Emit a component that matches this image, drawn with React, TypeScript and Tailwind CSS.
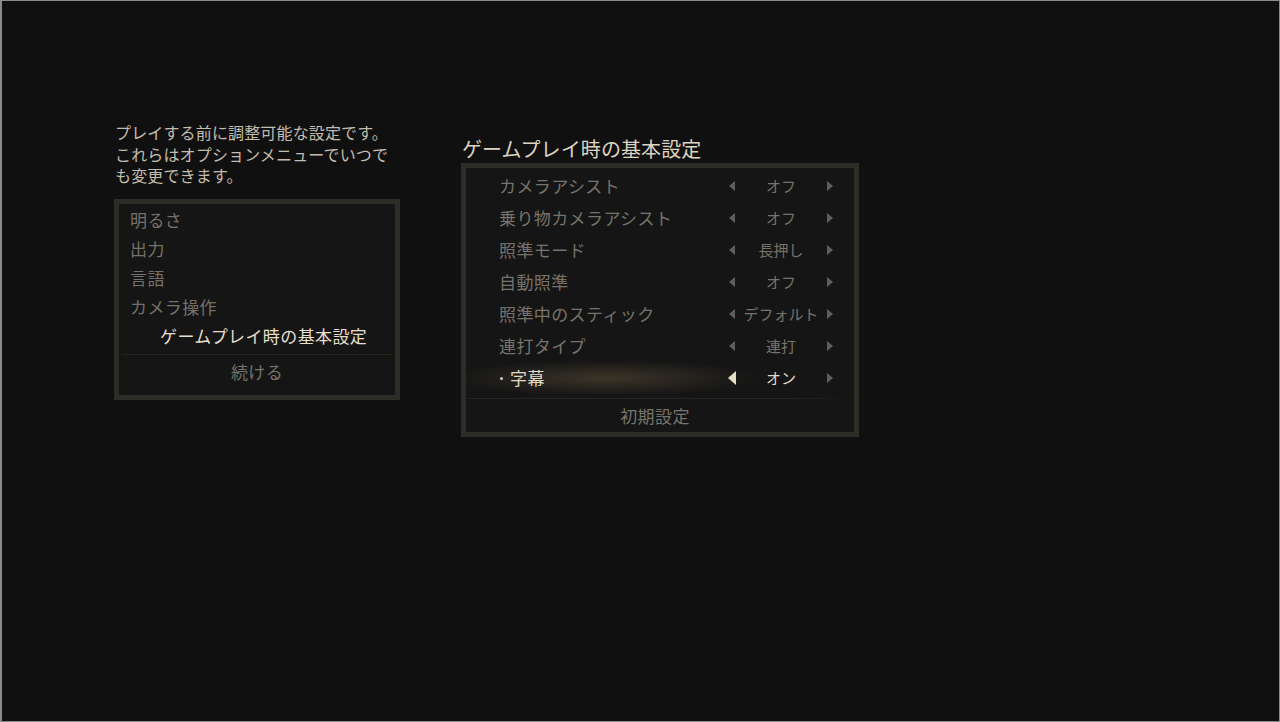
const FONT = { fontFamily: '"Noto Sans CJK JP", "Noto Sans", sans-serif' };

const menu = ['明るさ', '出力', '言語', 'カメラ操作', 'ゲームプレイ時の基本設定'];

const options = [
  { label: 'カメラアシスト', value: 'オフ' },
  { label: '乗り物カメラアシスト', value: 'オフ' },
  { label: '照準モード', value: '長押し' },
  { label: '自動照準', value: 'オフ' },
  { label: '照準中のスティック', value: 'デフォルト' },
  { label: '連打タイプ', value: '連打' },
  { label: '字幕', value: 'オン', active: true },
];

function Arrow({ dir, active = false }: { dir: 'left' | 'right'; active?: boolean }) {
  const w = active ? 8 : 6;
  const h = active ? 14 : 10;
  const pts = dir === 'left' ? `${w},0 ${w},${h} 0,${h / 2}` : `0,0 0,${h} ${w},${h / 2}`;
  return (
    <div className="flex w-3 items-center justify-center">
      <svg width={w} height={h} viewBox={`0 0 ${w} ${h}`}>
        <polygon points={pts} fill={active ? '#e6dec8' : '#5f5d58'} />
      </svg>
    </div>
  );
}

export default function App() {
  return (
    <div
      className="h-[722px] w-full overflow-hidden border-t border-l-2 border-r border-b border-[#8a8a8a] bg-[#101010]"
      style={FONT}
    >
      <div className="flex pl-[112px] pt-[121px]">
        {/* left column */}
        <div className="w-[286px]">
          <p className="pl-px text-[16px] leading-[21.5px] tracking-[0.15px] text-[#c4bdad]">
            プレイする前に調整可能な設定です。
            <br />
            これらはオプションメニューでいつで
            <br />
            も変更できます。
          </p>
          <div className="mt-[12px] border-[5px] border-[#2d2c27] bg-[#151515]">
            <div className="pt-[2px]">
              {menu.map((m, i) => {
                const sel = i === menu.length - 1;
                return (
                  <div
                    key={m}
                    className={`flex h-[29px] items-center text-[17px] tracking-[0.4px] ${
                      sel ? 'pl-[41px] text-[#e6dfcd]' : 'pl-[11px] text-[#75716a]'
                    }`}
                  >
                    {m}
                  </div>
                );
              })}
            </div>
            <div className="mx-[3px] mt-[3px] h-px bg-[#25241f]" />
            <div className="flex h-[40px] items-center justify-center pb-[5px] text-[17px] tracking-[0.4px] text-[#77736a]">
              続ける
            </div>
          </div>
        </div>

        {/* right column */}
        <div className="ml-[61px] mt-[14px] w-[398px]">
          <h1 className="h-[27px] pl-px text-[20px] leading-[26px] tracking-[0.1px] text-[#dcd4c0]">
            ゲームプレイ時の基本設定
          </h1>
          <div className="border-[5px] border-[#2d2c27] bg-[#151515]">
            <div className="pt-[2px]">
              {options.map((o) => (
                <div
                  key={o.label}
                  className={`flex h-8 items-center ${
                    o.active
                      ? 'bg-[radial-gradient(ellipse_155px_18px_at_140px_50%,#3b3428_0%,rgba(59,52,40,0.5)_50%,rgba(21,21,21,0)_100%)]'
                      : ''
                  }`}
                >
                  <div className="flex flex-1 items-center pl-[34px] tracking-[0.4px]">
                    {o.active ? (
                      <>
                        <span className="h-[3px] w-[3px] rounded-full bg-[#d8d0bc]" />
                        <span className="ml-[7px] text-[17px] text-[#e2dac6]">{o.label}</span>
                      </>
                    ) : (
                      <span className="-ml-px text-[17px] text-[#77736a]">{o.label}</span>
                    )}
                  </div>
                  <div className="mr-[18px] flex w-[110px] items-center">
                    <Arrow dir="left" active={o.active} />
                    <div
                      className={`w-[86px] text-center text-[15px] ${
                        o.active ? 'text-[#e0d8c4]' : 'text-[#77736a]'
                      }`}
                    >
                      {o.value}
                    </div>
                    <Arrow dir="right" />
                  </div>
                </div>
              ))}
            </div>
            <div className="mx-[2px] mt-[4px] h-px bg-[linear-gradient(90deg,#25241f_0%,#25241f_85%,rgba(37,36,31,0)_100%)]" />
            <div className="flex h-[33px] items-center justify-center pr-[10px] text-[17px] tracking-[0.4px] text-[#77736a]">
              初期設定
            </div>
          </div>
        </div>
      </div>
    </div>
  );
}
